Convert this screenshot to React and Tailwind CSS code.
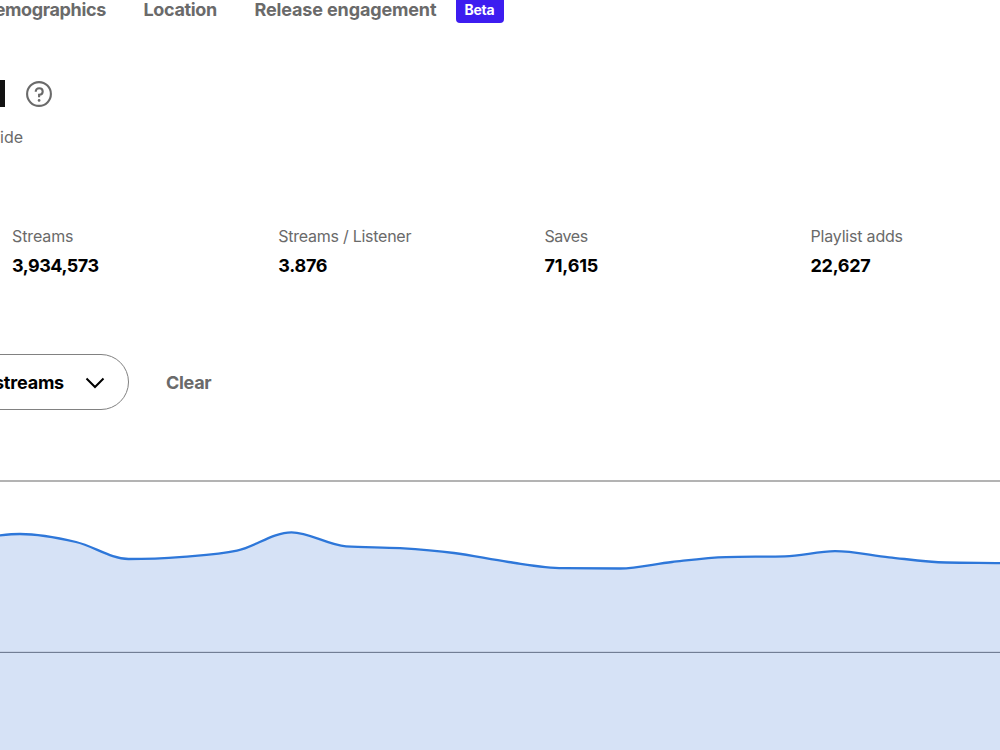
import clsx from 'clsx';

const stats = [
  { label: 'Streams', value: '3,934,573', labelClass: 'tracking-[-0.12px]', valueClass: 'tracking-[-0.5px]' },
  { label: 'Streams / Listener', value: '3.876', labelClass: 'tracking-[-0.25px]', valueClass: 'tracking-[-0.25px]' },
  { label: 'Saves', value: '71,615', labelClass: 'tracking-[-0.4px]', valueClass: 'tracking-[-0.15px]' },
  { label: 'Playlist adds', value: '22,627', labelClass: 'tracking-[-0.2px]', valueClass: 'tracking-[-0.3px]' },
];

// one point per day, y measured from the top of the chart
const points = [
  [-34, 60], [20, 54], [76, 62], [128.5, 79], [183, 76.8], [237, 70.7], [291.5, 52.3],
  [346, 66.3], [400, 68.2], [454, 73], [508.5, 82], [563, 88.2], [620, 88.5], [672, 82],
  [726, 77.1], [785, 76.3], [835, 71.2], [889, 77.3], [946, 82.5], [1000, 83.1], [1054, 84],
];

function monotonePath(pts) {
  const slopes = pts.slice(1).map((p, i) => (p[1] - pts[i][1]) / (p[0] - pts[i][0]));
  const tangents = pts.map((p, i) => {
    if (i === 0) return slopes[0];
    if (i === pts.length - 1) return slopes[i - 1];
    const a = slopes[i - 1];
    const b = slopes[i];
    if (a * b <= 0) return 0;
    const mean = (a + b) / 2;
    return Math.sign(mean) * Math.min(Math.abs(a) * 2, Math.abs(b) * 2, Math.abs(mean));
  });

  return pts.slice(1).reduce((d, [x, y], i) => {
    const [px, py] = pts[i];
    const dx = (x - px) / 3;
    return `${d} C${px + dx} ${py + dx * tangents[i]} ${x - dx} ${y - dx * tangents[i + 1]} ${x} ${y}`;
  }, `M${pts[0][0]} ${pts[0][1]}`);
}

function Tabs() {
  return (
    <nav className="flex h-[34px] shrink-0 -ml-[18px] text-[18px] leading-5 font-bold text-[#6a6a6a] whitespace-nowrap">
      <a className="w-[161.5px] tracking-[-0.36px]">Demographics</a>
      <a className="w-[111px] tracking-[-0.35px]">Location</a>
      <a className="w-[201px] tracking-[-0.14px]">Release engagement</a>
      <span className="-mt-1 flex h-[27px] w-[48px] items-center justify-center rounded bg-[#3d1df0] text-sm text-white tracking-[-0.2px]">
        Beta
      </span>
    </nav>
  );
}

function HelpIcon() {
  return (
    <svg width="26" height="26" viewBox="0 0 26 26" fill="none" stroke="#6a6a6a" strokeWidth="2.1">
      <circle cx="13" cy="13" r="11.9" />
      <path d="M9.7 10.7C9.7 8.6 11 7.2 13.2 7.2c2.1 0 3.5 1.3 3.5 3.2 0 2.1-1.5 3.2-3.6 3.3v2.6" />
      <circle cx="13.1" cy="19.4" r="1.35" fill="#6a6a6a" stroke="none" />
    </svg>
  );
}

function Chevron() {
  return (
    <svg className="mt-0.5 ml-[21px]" width="20" height="12" viewBox="0 0 20 12" fill="none" stroke="#000" strokeWidth="2">
      <path d="M1.5 1.5 10 10l8.5-8.5" />
    </svg>
  );
}

function StreamsChart() {
  const line = monotonePath(points);

  return (
    <svg className="block shrink-0" width="1000" height="270" viewBox="0 0 1000 270">
      <path d={`${line} V270 H-34 Z`} fill="#d6e2f6" />
      <rect y="0" width="1000" height="2" fill="#b3b3b3" />
      <rect y="171" width="1000" height="1" fill="#c6d1e5" />
      <rect y="172" width="1000" height="1" fill="#727e95" />
      <path d={line} fill="none" stroke="#2e77d9" strokeWidth="2.3" />
    </svg>
  );
}

function App() {
  return (
    <div className="flex h-[750px] w-[1000px] flex-col overflow-hidden bg-white font-['Inter',sans-serif]">
      <Tabs />

      {/* Title */}
      <div className="mt-[46px] flex h-7 items-start gap-[21px]">
        <div className="h-[27px] w-[5px] bg-[#121212]" />
        <div className="mt-px">
          <HelpIcon />
        </div>
      </div>
      <p className="-ml-[57.5px] mt-[17px] h-6 text-base leading-6 text-[#6a6a6a]">Worldwide</p>

      {/* Stats */}
      <div className="mt-[74px] ml-3 flex h-[61px] shrink-0">
        {stats.map((stat) => (
          <div key={stat.label} className="w-[266.2px] shrink-0">
            <p className={clsx('text-base leading-[26px] text-[#6a6a6a]', stat.labelClass)}>{stat.label}</p>
            <p className={clsx('mt-[2px] text-[18px] leading-[30px] font-bold text-black', stat.valueClass)}>{stat.value}</p>
          </div>
        ))}
      </div>

      {/* Filters */}
      <div className="mt-[70px] flex h-14 shrink-0 items-center text-[18px] font-bold">
        <button className="-ml-10 flex h-14 w-[169px] items-center justify-end rounded-full border border-[#818181] pr-[23px] tracking-[-0.2px]">
          streams
          <Chevron />
        </button>
        <button className="ml-[37px] text-[#6a6a6a] tracking-[-0.3px]">Clear</button>
      </div>

      <div className="mt-[70px]">
        <StreamsChart />
      </div>
    </div>
  );
}

export default App;
